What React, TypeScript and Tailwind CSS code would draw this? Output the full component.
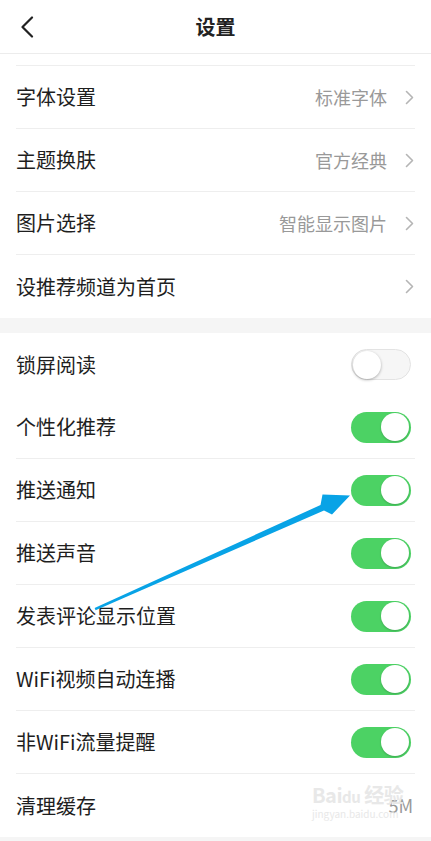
import React from "react";

const Chevron = () => (
  <svg width="9" height="15" viewBox="0 0 9 15" className="ml-[18px] mr-[1px]">
    <path d="M1.5 1.5 L7.5 7.5 L1.5 13.5" fill="none" stroke="#b5b5b5" strokeWidth="1.6" strokeLinecap="round" strokeLinejoin="round" />
  </svg>
);

const Toggle = ({ on }: { on: boolean }) =>
  on ? (
    <div className="mr-[4px] w-[60px] h-[31px] rounded-full bg-[#4cd264] flex items-center justify-end pr-[2px]">
      <div className="w-[28px] h-[28px] rounded-full bg-white shadow-[0_1px_2px_rgba(0,0,0,0.2)]" />
    </div>
  ) : (
    <div className="mr-[4px] w-[60px] h-[31px] rounded-full bg-[#f6f6f6] border border-[#e3e3e3] flex items-center pl-[1px]">
      <div className="w-[28px] h-[28px] rounded-full bg-white shadow-[0_1px_3px_rgba(0,0,0,0.3)]" />
    </div>
  );

const Row = ({ label, children, border = true }: any) => (
  <div className={`h-[63px] mx-4 flex items-center justify-between ${border ? "border-b border-[#eeeeee]" : ""}`}>
    <span className="text-[20px] text-[#1e1e1e]">{label}</span>
    <div className="flex items-center">{children}</div>
  </div>
);

const App = () => {
  const font = { fontFamily: '"Noto Sans CJK SC", "Noto Sans", sans-serif' };
  return (
    <div className="relative w-[431px] h-[841px] bg-white overflow-hidden" style={font}>
      <header className="h-[54px] border-b border-[#ececec] flex items-center justify-center relative">
        <svg width="14" height="22" viewBox="0 0 14 22" className="absolute left-[20px] top-[16px]">
          <path d="M12 1.5 L2.5 11 L12 20.5" fill="none" stroke="#222" strokeWidth="2.2" strokeLinecap="round" strokeLinejoin="round" />
        </svg>
        <h1 className="text-[20px] font-bold text-[#222]">设置</h1>
      </header>
      <div className="h-[11px]" />
      <div className="mx-4 border-t border-[#eeeeee]" />
      <Row label="字体设置">
        <span className="text-[18px] text-[#999]">标准字体</span>
        <Chevron />
      </Row>
      <Row label="主题换肤">
        <span className="text-[18px] text-[#999]">官方经典</span>
        <Chevron />
      </Row>
      <Row label="图片选择">
        <span className="text-[18px] text-[#999]">智能显示图片</span>
        <Chevron />
      </Row>
      <Row label="设推荐频道为首页" border={false}>
        <Chevron />
      </Row>
      <div className="h-[15px] bg-[#f5f5f5]" />
      <Row label="锁屏阅读" border={false}>
        <Toggle on={false} />
      </Row>
      <Row label="个性化推荐">
        <Toggle on />
      </Row>
      <Row label="推送通知">
        <Toggle on />
      </Row>
      <Row label="推送声音">
        <Toggle on />
      </Row>
      <Row label="发表评论显示位置">
        <Toggle on />
      </Row>
      <Row label="WiFi视频自动连播">
        <Toggle on />
      </Row>
      <Row label="非WiFi流量提醒">
        <Toggle on />
      </Row>
      <Row label="清理缓存" border={false}>
        <span className="text-[18px] text-[#999] mr-[2px]">5M</span>
      </Row>
      <div className="h-[10px] bg-[#f5f5f5]" />

      <div className="absolute left-[312px] top-[785px] flex flex-col items-start text-[#e8e8e8] pointer-events-none">
        <span className="text-[20px] font-bold leading-none tracking-tight">Bai<span className="text-[15px]">du</span> 经验</span>
        <span className="text-[10px] leading-none mt-[4px]">jingyan.baidu.com</span>
      </div>

      <svg className="absolute left-0 top-0 pointer-events-none" width="431" height="841">
        <polygon
          points="94.6,608.1 320.5,505 322.5,494.5 350,495.5 332,514.5 324,510.5 95.6,610.2"
          fill="#08a3e6"
        />
      </svg>
    </div>
  );
};

export default App;
